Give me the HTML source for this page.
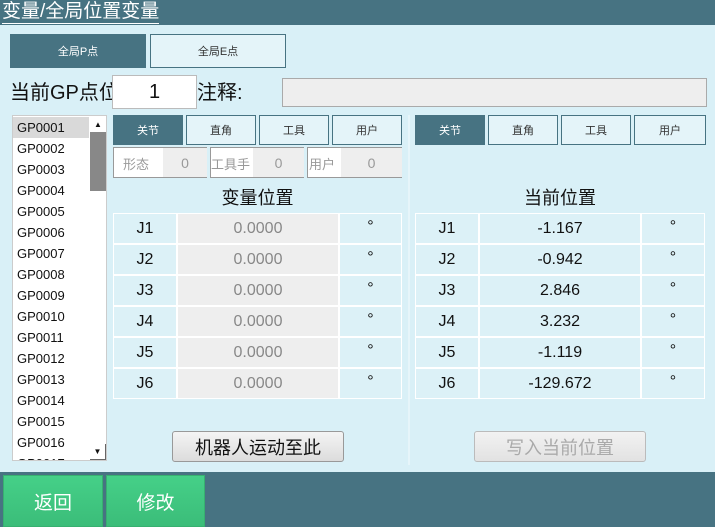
<!DOCTYPE html><html><head><meta charset="utf-8"><style>
*{box-sizing:border-box;margin:0;padding:0}
body{width:715px;height:527px;background:#d9f0f7;position:relative;overflow:hidden;font-family:"Liberation Sans","Noto Sans CJK SC",sans-serif;color:#111}
.a{position:absolute}
.c{display:flex;align-items:center;justify-content:center}
.tab{border:1px solid #477382;background:#e4f4f9;font-size:11px;color:#333}
.tab.on{background:#477382;color:#fff}
.cell{background:#dcf1f7;border:1px solid #fff;font-size:16px}
.g{background:#eeeeee;color:#888}
.sm{border:1px solid #999;background:#fff;font-size:13px;color:#999}
.li{position:absolute;left:4px;font-size:13px;height:21px;line-height:21px}
</style></head><body>
<div class="a" style="left:0;top:0;width:715px;height:25px;background:#477382"></div>
<div class="a" style="left:2px;top:1px;font-size:19px;color:#fff;line-height:22px;border-bottom:1px solid #fff">变量/全局位置变量</div>
<div class="a c tab on" style="left:10px;top:34px;width:136px;height:34px">全局P点</div>
<div class="a c tab" style="left:150px;top:34px;width:136px;height:34px">全局E点</div>
<div class="a" style="left:10px;top:80px;font-size:20px;line-height:26px">当前GP点位</div>
<div class="a c" style="left:112px;top:75px;width:85px;height:34px;background:#fff;border:1px solid #bbb;font-size:20px">1</div>
<div class="a" style="left:197px;top:80px;font-size:20px;line-height:26px">注释:</div>
<div class="a" style="left:282px;top:78px;width:425px;height:29px;background:#eee;border:1px solid #aaa"></div>
<div class="a" style="left:12px;top:115px;width:95px;height:346px;background:#fff;border:1px solid #ccc;overflow:hidden">
<div class="a" style="left:0;top:1px;width:76px;height:21px;background:#d9d9d9"></div>
<div class="li" style="top:1px">GP0001</div><div class="li" style="top:22px">GP0002</div><div class="li" style="top:43px">GP0003</div><div class="li" style="top:64px">GP0004</div><div class="li" style="top:85px">GP0005</div><div class="li" style="top:106px">GP0006</div><div class="li" style="top:127px">GP0007</div><div class="li" style="top:148px">GP0008</div><div class="li" style="top:169px">GP0009</div><div class="li" style="top:190px">GP0010</div><div class="li" style="top:211px">GP0011</div><div class="li" style="top:232px">GP0012</div><div class="li" style="top:253px">GP0013</div><div class="li" style="top:274px">GP0014</div><div class="li" style="top:295px">GP0015</div><div class="li" style="top:316px">GP0016</div><div class="li" style="top:337px">GP0017</div>
<div class="a" style="left:77px;top:0;width:16px;height:344px;background:#fff"></div>
<div class="a c" style="left:77px;top:0;width:16px;height:16px;font-size:8px">▲</div>
<div class="a" style="left:77px;top:16px;width:16px;height:59px;background:#888"></div>
<div class="a c" style="left:77px;top:328px;width:16px;height:16px;font-size:8px;border-right:1px solid #666;border-bottom:1px solid #666">▼</div>
</div>
<div class="a c tab on" style="left:113px;top:115px;width:70px;height:30px">关节</div>
<div class="a c tab" style="left:186px;top:115px;width:70px;height:30px">直角</div>
<div class="a c tab" style="left:259px;top:115px;width:70px;height:30px">工具</div>
<div class="a c tab" style="left:332px;top:115px;width:70px;height:30px">用户</div>
<div class="a c tab on" style="left:415px;top:115px;width:70px;height:30px">关节</div>
<div class="a c tab" style="left:488px;top:115px;width:70px;height:30px">直角</div>
<div class="a c tab" style="left:561px;top:115px;width:70px;height:30px">工具</div>
<div class="a c tab" style="left:634px;top:115px;width:72px;height:30px">用户</div>
<div class="a sm" style="left:113px;top:147px;width:94px;height:31px"><span class="a" style="left:9px;top:6px">形态</span><div class="a c" style="left:49px;top:0;width:44px;height:29px;background:#eee;font-size:14px">0</div></div>
<div class="a sm" style="left:210px;top:147px;width:94px;height:31px"><span class="a" style="left:0;top:6px">工具手</span><div class="a c" style="left:42px;top:0;width:51px;height:29px;background:#eee;font-size:14px">0</div></div>
<div class="a sm" style="left:307px;top:147px;width:95px;height:31px"><span class="a" style="left:1px;top:6px">用户</span><div class="a c" style="left:33px;top:0;width:61px;height:29px;background:#eee;font-size:14px">0</div></div>
<div class="a" style="left:408px;top:115px;width:2px;height:350px;background:#e6f5fa"></div>
<div class="a c" style="left:113px;top:184px;width:289px;height:26px;font-size:18px">变量位置</div>
<div class="a c" style="left:415px;top:184px;width:290px;height:26px;font-size:18px">当前位置</div>
<div id="t"></div>
<script>
var L=[["J1","0.0000","-1.167"],["J2","0.0000","-0.942"],["J3","0.0000","2.846"],["J4","0.0000","3.232"],["J5","0.0000","-1.119"],["J6","0.0000","-129.672"]],h="";
L.forEach(function(r,i){var y=213+i*31;
h+='<div class="a c cell" style="left:113px;top:'+y+'px;width:64px;height:31px">'+r[0]+'</div>';
h+='<div class="a c cell g" style="left:177px;top:'+y+'px;width:162px;height:31px">'+r[1]+'</div>';
h+='<div class="a c cell" style="left:339px;top:'+y+'px;width:63px;height:31px;align-items:flex-start;padding-top:4px">°</div>';
h+='<div class="a c cell" style="left:415px;top:'+y+'px;width:64px;height:31px">'+r[0]+'</div>';
h+='<div class="a c cell" style="left:479px;top:'+y+'px;width:162px;height:31px">'+r[2]+'</div>';
h+='<div class="a c cell" style="left:641px;top:'+y+'px;width:64px;height:31px;align-items:flex-start;padding-top:4px">°</div>';});
document.getElementById("t").innerHTML=h;
</script>
<div class="a c" style="left:172px;top:431px;width:172px;height:31px;border:1px solid #999;border-radius:3px;background:linear-gradient(#f4f4f4,#dcdcdc);font-size:18px">机器人运动至此</div>
<div class="a c" style="left:474px;top:431px;width:172px;height:31px;border:1px solid #bbb;border-radius:3px;background:linear-gradient(#f2f2f2,#e2e2e2);font-size:18px;color:#aaa">写入当前位置</div>
<div class="a" style="left:0;top:472px;width:715px;height:55px;background:#477382"></div>
<div class="a c" style="left:3px;top:475px;width:100px;height:52px;background:linear-gradient(#45d088,#3bbd79);border:1px solid #37b070;color:#fff;font-size:19px">返回</div>
<div class="a c" style="left:106px;top:475px;width:99px;height:52px;background:linear-gradient(#45d088,#3bbd79);border:1px solid #37b070;color:#fff;font-size:19px">修改</div>
</body></html>
